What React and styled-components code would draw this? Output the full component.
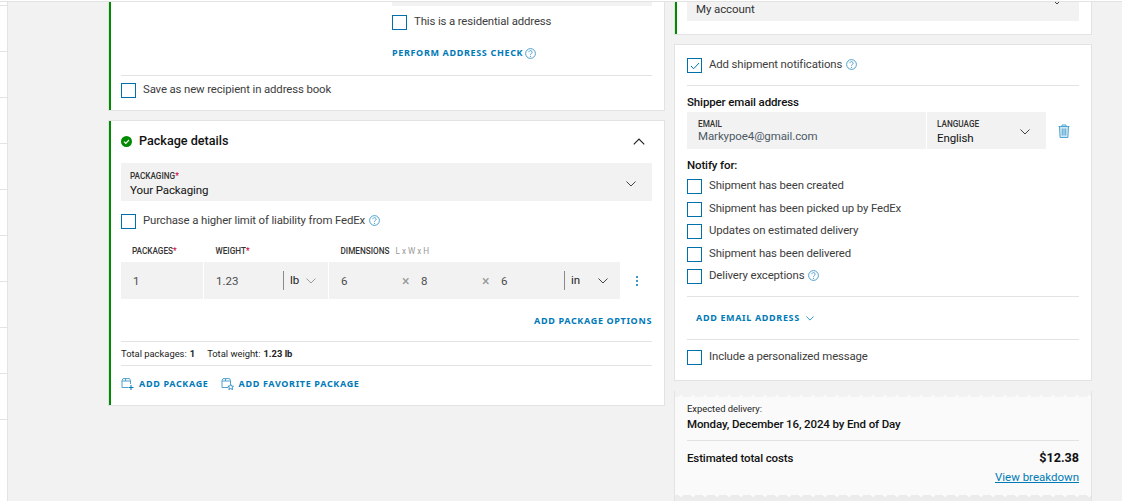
import React from 'react';
import styled, { createGlobalStyle } from 'styled-components';

const GlobalStyle = createGlobalStyle`
  html, body {
    margin: 0;
    padding: 0;
    background: #f2f2f2;
  }
  * {
    box-sizing: border-box;
  }
`;

const BLUE = '#007ab7';
const LINE = '#e3e3e3';

const Page = styled.div`
  width: 1122px;
  height: 501px;
  overflow: hidden;
  background: #f2f2f2;
  font-family: Roboto, sans-serif;
  font-size: 11.5px;
  color: #333;
`;

const TopRule = styled.div`
  height: 2px;
  background: #fff;
  border-bottom: 1px solid ${LINE};
`;

const Body = styled.div`
  display: flex;
  align-items: flex-start;
`;

const Strip = styled.div`
  width: 8px;
  height: 499px;
  background: #fff;
  border-right: 1px solid ${LINE};
`;

const StripRow = styled.div`
  height: ${(p) => p.$h}px;
  border-bottom: 1px solid ${LINE};
`;

const LeftColumn = styled.div`
  width: 557px;
  margin-left: 100px;
  display: flex;
  flex-direction: column;
  gap: 9px;
`;

const RightColumn = styled.div`
  width: 418px;
  margin-left: 9px;
  display: flex;
  flex-direction: column;
`;

const Card = styled.section`
  background: #fff;
  border: 1px solid ${LINE};
  border-top-width: ${(p) => (p.$cut ? 0 : 1)}px;
  padding: 0 12px;
  height: ${(p) => p.$h}px;
  margin-top: ${(p) => p.$top || 0}px;
  box-shadow: ${(p) => (p.$green ? 'inset 2px 0 0 #008a00' : 'none')};
`;

const Divider = styled.div`
  height: 1px;
  background: ${LINE};
  margin-top: ${(p) => p.$top || 0}px;
`;

const Stub = styled.div`
  height: 4px;
  background: #f2f2f2;
`;

const AddressBlock = styled.div`
  margin-left: 271px;
`;

const Row = styled.label`
  display: flex;
  align-items: flex-start;
  gap: 7px;
  margin-top: ${(p) => p.$top || 0}px;
  height: 15px;
`;

const Box = styled.span`
  flex: none;
  width: 15px;
  height: 15px;
  border: 1px solid #0070ad;
  display: flex;
  align-items: center;
  justify-content: center;
`;

const RowText = styled.span`
  font-size: 11.4px;
  line-height: 13px;
  letter-spacing: -0.13px;
  color: #3d3d3d;
  display: flex;
  align-items: center;
  gap: 4px;
`;

const ActionLink = styled.a`
  display: flex;
  align-items: center;
  font-family: 'Noto Sans', sans-serif;
  font-size: 9px;
  line-height: 12px;
  font-weight: 700;
  letter-spacing: 0.66px;
  color: ${BLUE};
  gap: ${(p) => p.$gap || 2}px;
`;

const ActionRow = styled.div`
  display: flex;
  justify-content: ${(p) => (p.$end ? 'flex-end' : 'flex-start')};
  align-items: center;
  margin-top: ${(p) => p.$top || 0}px;
  padding-left: ${(p) => p.$pad || 0}px;
  gap: ${(p) => p.$gap || 0}px;
`;

const CardHeader = styled.header`
  display: flex;
  align-items: center;
  height: 18px;
  margin-top: 11px;
  gap: 7px;
`;

const CardTitle = styled.h2`
  flex: 1;
  margin: 0;
  font-size: 12.6px;
  line-height: 18px;
  font-weight: 500;
  color: #111;
`;

const HeaderToggle = styled.span`
  display: flex;
  margin-right: 7px;
`;

const Select = styled.div`
  display: flex;
  align-items: center;
  justify-content: space-between;
  height: 38px;
  margin-top: ${(p) => p.$top || 0}px;
  padding: 4px 16px 0 9px;
  background: #f2f2f2;
`;

const AccountSelect = styled(Select)`
  height: 19px;
  padding: 0 17px 0 9px;
  align-items: flex-start;
  overflow: hidden;

  svg {
    margin-top: -3px;
  }
`;

const FieldLabel = styled.div`
  font-size: 8.2px;
  line-height: 10px;
  font-weight: 500;
  color: #333;
`;

const Star = styled.span`
  color: #d4003c;
`;

const FieldValue = styled.div`
  font-size: 11.5px;
  line-height: 14px;
  letter-spacing: -0.1px;
  margin-top: ${(p) => p.$top || 0}px;
  color: ${(p) => p.$color || '#111'};
`;

const LabelRow = styled.div`
  display: flex;
  height: 10px;
  margin-top: 17px;
  padding-left: 11px;
`;

const ColumnLabel = styled(FieldLabel)`
  width: ${(p) => p.$w}px;
  flex: none;
`;

const Hint = styled.span`
  font-weight: 400;
  color: #9a9a9a;
  margin-left: 6px;
`;

const MeasureRow = styled.div`
  display: flex;
  align-items: center;
  gap: 1px;
  height: 37px;
  margin-top: 6px;
`;

const Cell = styled.div`
  display: flex;
  align-items: center;
  height: 37px;
  width: ${(p) => p.$w}px;
  flex: none;
  padding-left: 12px;
  background: #f2f2f2;
  font-size: 11.5px;
  color: #4d4d4d;
`;

const CellValue = styled.span`
  width: ${(p) => p.$w}px;
  flex: none;
`;

const UnitBar = styled.span`
  flex: none;
  width: 1px;
  height: 19px;
  background: #8a8a8a;
  margin-right: 6px;
`;

const UnitText = styled.span`
  width: ${(p) => p.$w}px;
  flex: none;
  color: #222;
  margin-top: -1px;
`;

const Times = styled.span`
  width: 19px;
  flex: none;
  color: #999;
  font-size: 14px;
`;

const Kebab = styled.div`
  margin-left: 15px;
  display: flex;
  flex-direction: column;
  gap: 2px;
`;

const KebabDot = styled.span`
  width: 2px;
  height: 2px;
  background: #3d96c8;
`;

const Totals = styled.div`
  display: flex;
  gap: 12px;
  height: 23px;
  align-items: center;
  font-size: 9.4px;
  color: #222;
`;

const TotalValue = styled.b`
  font-weight: 700;
  margin-left: 3px;
`;

const Subhead = styled.div`
  font-size: 11.5px;
  line-height: 14px;
  letter-spacing: -0.13px;
  font-weight: 500;
  color: #111;
  margin-top: ${(p) => p.$top || 0}px;
`;

const EmailRow = styled.div`
  display: flex;
  align-items: center;
  gap: 1px;
  margin-top: 3px;
  height: 37px;
`;

const EmailField = styled.div`
  width: 239px;
  height: 37px;
  padding: 7px 0 0 11px;
  background: #f2f2f2;
`;

const LanguageField = styled.div`
  width: 119px;
  height: 37px;
  padding: 3px 16px 0 10px;
  background: #f2f2f2;
  display: flex;
  justify-content: space-between;
  align-items: center;
`;

const TrashButton = styled.button`
  border: 0;
  padding: 0;
  margin-left: 11px;
  background: none;
  display: flex;
`;

const Receipt = styled.section`
  position: relative;
  height: 112px;
  margin-top: 10px;
  padding: 12px 12px 0;
  background: #fafafa;
  border-left: 1px solid ${LINE};
  border-right: 1px solid ${LINE};

  &::before {
    content: '';
    position: absolute;
    left: 0;
    right: 0;
    top: 0;
    height: 6px;
    background-image: linear-gradient(135deg, #f2f2f2 50%, transparent 50%),
      linear-gradient(225deg, #f2f2f2 50%, transparent 50%);
    background-size: 12px 6px;
  }

  &::after {
    content: '';
    position: absolute;
    left: 0;
    right: 0;
    top: 104px;
    height: 6px;
    background-image: linear-gradient(45deg, #ececec 50%, transparent 50%),
      linear-gradient(315deg, #ececec 50%, transparent 50%);
    background-size: 12px 6px;
  }
`;

const SmallText = styled.div`
  font-size: 9.4px;
  line-height: 12px;
  color: #222;
`;

const StrongText = styled.div`
  font-size: 11.5px;
  line-height: 14px;
  letter-spacing: -0.13px;
  font-weight: 500;
  color: #111;
  margin-top: ${(p) => p.$top || 0}px;
`;

const CostRow = styled.div`
  display: flex;
  justify-content: space-between;
  align-items: center;
  margin-top: 9px;
`;

const Price = styled.div`
  font-size: 12.6px;
  line-height: 16px;
  font-weight: 700;
  color: #111;
`;

const Breakdown = styled.a`
  display: block;
  text-align: right;
  font-size: 11.5px;
  line-height: 14px;
  margin-top: 4px;
  color: ${BLUE};
  text-decoration: underline;
`;

const Chevron = ({ up, color = '#444', w = 10 }) => (
  <svg width={w} height={w / 2 + 1} viewBox="0 0 10 6" fill="none" style={{ flex: 'none' }}>
    <path d={up ? 'M0.5 5.5 L5 1 L9.5 5.5' : 'M0.5 0.5 L5 5 L9.5 0.5'} stroke={color} strokeWidth="1" />
  </svg>
);

const Help = () => (
  <svg width="11" height="11" viewBox="0 0 11 11" fill="none" style={{ flex: 'none' }}>
    <circle cx="5.5" cy="5.5" r="4.9" stroke="#3d96c8" strokeWidth="0.9" />
    <path d="M3.9 4.2a1.6 1.6 0 1 1 2.5 1.3c-.6.4-.9.7-.9 1.3" stroke="#3d96c8" strokeWidth="0.9" />
    <circle cx="5.5" cy="8.3" r="0.6" fill="#3d96c8" />
  </svg>
);

const GreenCheck = () => (
  <svg width="11" height="11" viewBox="0 0 11 11" style={{ flex: 'none' }}>
    <circle cx="5.5" cy="5.5" r="5.5" fill="#008a00" />
    <path d="M3 5.6l1.8 1.7L8 4" fill="none" stroke="#fff" strokeWidth="1.2" />
  </svg>
);

const Tick = () => (
  <svg width="10" height="8" viewBox="0 0 10 8" fill="none">
    <path d="M1 4l2.6 2.8L9 1" stroke={BLUE} strokeWidth="1" />
  </svg>
);

const Trash = () => (
  <svg width="12" height="14" viewBox="0 0 12 14" fill="none">
    <path d="M0.5 2.5h11M4 2.5V1h4v1.5" stroke="#4fa3d1" />
    <path d="M1.5 2.5l.6 11h7.8l.6-11z" fill="#cfe6f3" stroke="#4fa3d1" />
    <path d="M4.3 4.5v7M6 4.5v7M7.7 4.5v7" stroke="#4fa3d1" strokeWidth="0.9" />
  </svg>
);

const PackageIcon = ({ star }) => (
  <svg width="13" height="12" viewBox="0 0 13 12" fill="none" style={{ flex: 'none' }}>
    <path d="M7 9.5H1V2.5L2 .6h6.5l1 1.9v3.5" stroke="#3d96c8" strokeWidth="0.9" />
    <path d="M1 3h8.5M4.5 .6V3" stroke="#3d96c8" strokeWidth="0.9" />
    {star ? (
      <path d="M9.7 6.3l.9 1.8 1.9.2-1.4 1.3.4 2-1.8-1-1.8 1 .4-2-1.4-1.3 1.9-.2z" stroke={BLUE} strokeWidth="0.8" />
    ) : (
      <path d="M10 7v5M7.5 9.5h5" stroke={BLUE} strokeWidth="1" />
    )}
  </svg>
);

const CheckRow = ({ top, checked, help, children }) => (
  <Row $top={top}>
    <Box>{checked && <Tick />}</Box>
    <RowText>
      {children}
      {help && <Help />}
    </RowText>
  </Row>
);

const stripRows = [4, 46, 46, 46, 46, 46, 46, 46, 46, 46];
const notifications = [
  { text: 'Shipment has been created', top: 7 },
  { text: 'Shipment has been picked up by FedEx', top: 8 },
  { text: 'Updates on estimated delivery', top: 7 },
  { text: 'Shipment has been delivered', top: 8 },
  { text: 'Delivery exceptions', top: 7, help: true },
];

export default function App() {
  return (
    <Page>
      <GlobalStyle />
      <TopRule />
      <Body>
        <Strip>
          {stripRows.map((h, i) => (
            <StripRow key={i} $h={h} />
          ))}
        </Strip>

        <LeftColumn>
          <Card $green $cut $h={109}>
            <AddressBlock>
              <Stub />
              <CheckRow top={9}>This is a residential address</CheckRow>
              <ActionRow $top={17}>
                <ActionLink>
                  PERFORM ADDRESS CHECK
                  <Help />
                </ActionLink>
              </ActionRow>
            </AddressBlock>
            <Divider $top={16} />
            <CheckRow top={7}>Save as new recipient in address book</CheckRow>
          </Card>

          <Card $green $h={286}>
            <CardHeader>
              <GreenCheck />
              <CardTitle>Package details</CardTitle>
              <HeaderToggle>
                <Chevron up color="#222" w={12} />
              </HeaderToggle>
            </CardHeader>
            <Select $top={13}>
              <div>
                <FieldLabel>
                  PACKAGING<Star>*</Star>
                </FieldLabel>
                <FieldValue $top={2}>Your Packaging</FieldValue>
              </div>
              <Chevron />
            </Select>
            <CheckRow top={13} help>
              Purchase a higher limit of liability from FedEx
            </CheckRow>
            <LabelRow>
              <ColumnLabel $w={83.5}>
                PACKAGES<Star>*</Star>
              </ColumnLabel>
              <ColumnLabel $w={125}>
                WEIGHT<Star>*</Star>
              </ColumnLabel>
              <ColumnLabel $w={200}>
                DIMENSIONS<Hint>L x W x H</Hint>
              </ColumnLabel>
            </LabelRow>
            <MeasureRow>
              <Cell $w={82}>1</Cell>
              <Cell $w={124}>
                <CellValue $w={67}>1.23</CellValue>
                <UnitBar />
                <UnitText $w={16}>lb</UnitText>
                <Chevron color="#999" />
              </Cell>
              <Cell $w={291}>
                <CellValue $w={61}>6</CellValue>
                <Times>×</Times>
                <CellValue $w={61}>8</CellValue>
                <Times>×</Times>
                <CellValue $w={63}>6</CellValue>
                <UnitBar />
                <UnitText $w={27}>in</UnitText>
                <Chevron />
              </Cell>
              <Kebab>
                <KebabDot />
                <KebabDot />
                <KebabDot />
              </Kebab>
            </MeasureRow>
            <ActionRow $end $top={16}>
              <ActionLink>ADD PACKAGE OPTIONS</ActionLink>
            </ActionRow>
            <Divider $top={14} />
            <Totals>
              <span>
                Total packages:<TotalValue>1</TotalValue>
              </span>
              <span>
                Total weight:<TotalValue>1.23 lb</TotalValue>
              </span>
            </Totals>
            <Divider />
            <ActionRow $top={12} $gap={12}>
              <ActionLink $gap={5}>
                <PackageIcon />
                ADD PACKAGE
              </ActionLink>
              <ActionLink $gap={5}>
                <PackageIcon star />
                ADD FAVORITE PACKAGE
              </ActionLink>
            </ActionRow>
          </Card>
        </LeftColumn>

        <RightColumn>
          <Card $green $cut $h={33}>
            <AccountSelect>
              <FieldValue $color="#333">My account</FieldValue>
              <Chevron />
            </AccountSelect>
          </Card>

          <Card $h={337} $top={9}>
            <CheckRow top={13} checked help>
              Add shipment notifications
            </CheckRow>
            <Divider $top={12} />
            <Subhead $top={9}>Shipper email address</Subhead>
            <EmailRow>
              <EmailField>
                <FieldLabel>EMAIL</FieldLabel>
                <FieldValue $color="#4d5a66">Markypoe4@gmail.com</FieldValue>
              </EmailField>
              <LanguageField>
                <div>
                  <FieldLabel>LANGUAGE</FieldLabel>
                  <FieldValue $top={2}>English</FieldValue>
                </div>
                <Chevron />
              </LanguageField>
              <TrashButton>
                <Trash />
              </TrashButton>
            </EmailRow>
            <Subhead $top={9}>Notify for:</Subhead>
            {notifications.map((n) => (
              <CheckRow key={n.text} top={n.top} help={n.help}>
                {n.text}
              </CheckRow>
            ))}
            <Divider $top={12} />
            <ActionRow $top={15} $pad={9}>
              <ActionLink $gap={6}>
                ADD EMAIL ADDRESS
                <Chevron color={BLUE} w={8} />
              </ActionLink>
            </ActionRow>
            <Divider $top={15} />
            <CheckRow top={10}>Include a personalized message</CheckRow>
          </Card>

          <Receipt>
            <SmallText>Expected delivery:</SmallText>
            <StrongText $top={2}>Monday, December 16, 2024 by End of Day</StrongText>
            <Divider $top={9} />
            <CostRow>
              <StrongText>Estimated total costs</StrongText>
              <Price>$12.38</Price>
            </CostRow>
            <Breakdown>View breakdown</Breakdown>
          </Receipt>
        </RightColumn>
      </Body>
    </Page>
  );
}
